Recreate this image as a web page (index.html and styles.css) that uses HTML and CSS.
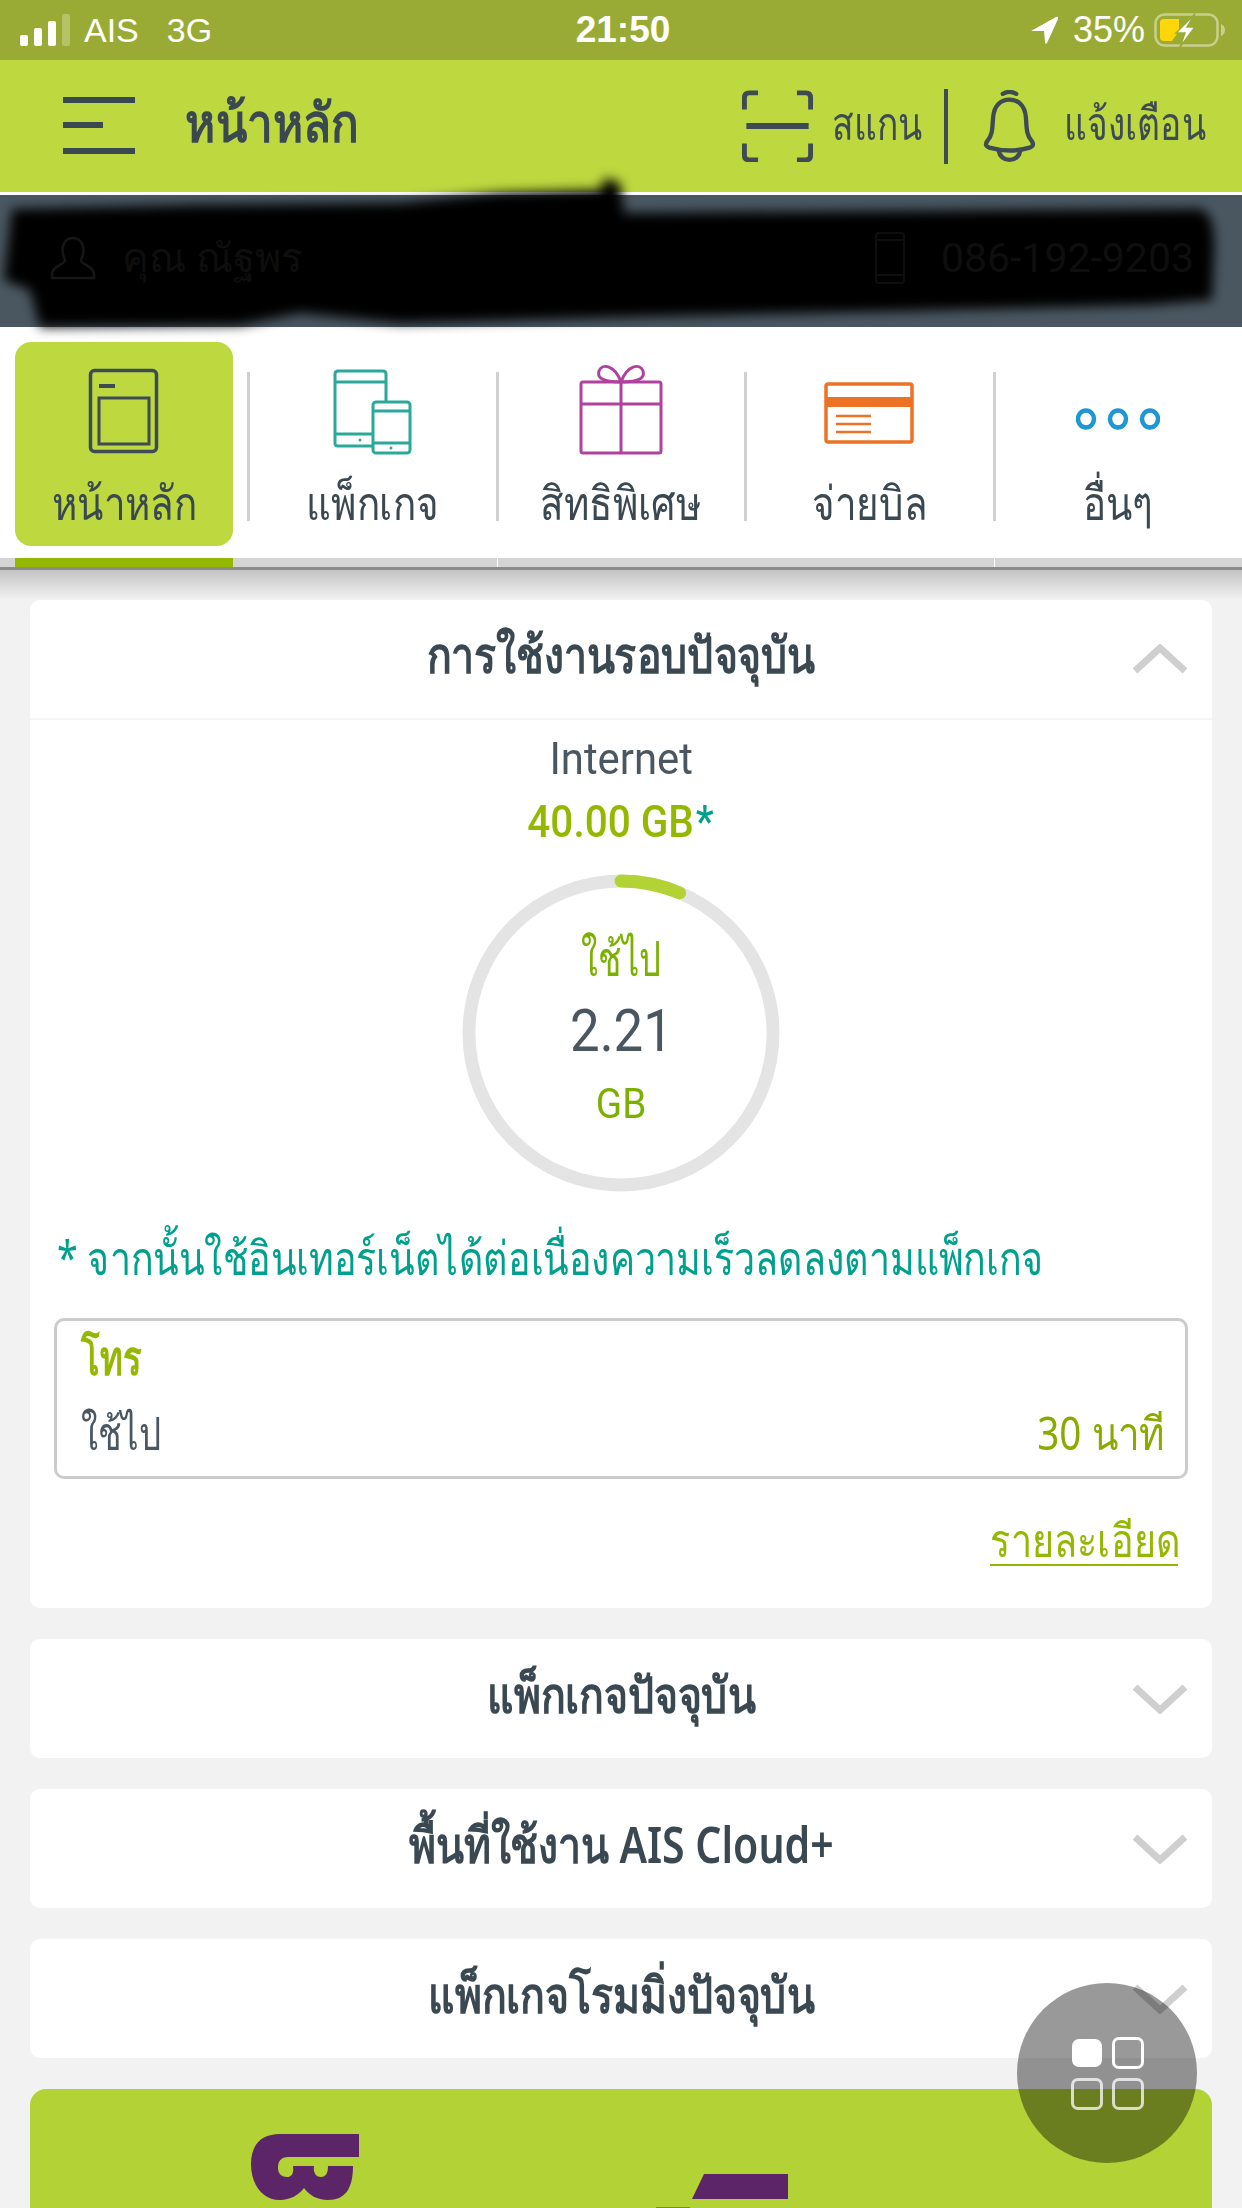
FILE: index.html
```html
<!DOCTYPE html>
<html lang="th">
<head>
    <meta charset="UTF-8">
    <meta name="viewport" content="width=device-width, initial-scale=1.0">
    <title>หน้าหลัก</title>
    <link rel="stylesheet" href="styles.css">
</head>
<body>
<div class="page">
    <div class="status-bar">
        <div class="status-left">
            <div class="signal"><i class="b1"></i><i class="b2"></i><i class="b3"></i><i class="b4"></i></div>
            <span>AIS</span>
            <span>3G</span>
        </div>
        <div class="status-time">21:50</div>
        <div class="status-right">
            <svg class="arrow-icon" width="27" height="28" viewBox="0 0 27 28"><path d="M0 15 L25 1 Q28 0 27 3 L16 27 Q14 29 14 26 L13 15 Z" fill="#fff"/></svg>
            <span>35%</span>
            <svg width="72" height="34" viewBox="0 0 72 34">
                <rect x="1.5" y="1.5" width="62" height="31" rx="9" fill="none" stroke="#c8d08c" stroke-width="2.5"/>
                <path d="M6 10 Q6 6 10 6 H25 V18 L18 28 H10 Q6 28 6 24 Z" fill="#ffd60a"/>
                <path d="M67 11 Q71 13 71 17 Q71 21 67 23 Z" fill="#c8d08c"/>
                <path d="M41 1 L22 20 H31 L26 34 L41 14 H33 Z" fill="#fff" stroke="#9aab35" stroke-width="1.5"/>
            </svg>
        </div>
    </div>

    <header class="top-bar">
        <div class="menu-icon"><i></i><i class="short"></i><i></i></div>
        <h1 class="page-title">หน้าหลัก</h1>
        <div class="top-actions">
            <svg class="scan-icon" width="73" height="72" viewBox="0 0 74 74" fill="none" stroke="#3e4b55" stroke-width="5">
                <path d="M17 3 H8 Q3 3 3 8 V20"/><path d="M57 3 H66 Q71 3 71 8 V20"/>
                <path d="M3 55 V67 Q3 72 8 72 H17"/><path d="M71 55 V67 Q71 72 66 72 H57"/>
                <path d="M5 37 H69" stroke-width="6"/>
            </svg>
            <span class="action-label scan-label">สแกน</span>
            <span class="action-sep"></span>
            <svg class="bell-icon" width="57" height="73" viewBox="0 0 58 76" fill="none" stroke="#3e4b55" stroke-width="4.5" stroke-linecap="round">
                <path d="M22 4 Q29 0 36 4"/>
                <path d="M6 53 C12 46 11 38 12 28 C13 16 20 10 29 10 C38 10 45 16 46 28 C47 38 46 46 52 53 C55 57 53 59 50 60 C36 64 22 64 8 60 C5 59 3 57 6 53 Z"/>
                <path d="M18 63 C19 76 39 76 40 63"/>
            </svg>
            <span class="action-label alert-label">แจ้งเตือน</span>
        </div>
    </header>

    <section class="profile-bar">
        <div class="profile-user">
            <svg width="46" height="44" viewBox="0 0 46 44" fill="none" stroke="#161616" stroke-width="2.5"><path d="M15 24 C10 14 13 2 23 2 C33 2 36 14 31 24 C30 28 44 30 44 38 V42 H2 V38 C2 30 16 28 15 24 Z"/></svg>
            <span>คุณ ณัฐพร</span>
        </div>
        <div class="profile-phone">
            <svg width="30" height="52" viewBox="0 0 30 52" fill="none" stroke="#0e0e0e" stroke-width="2"><rect x="1" y="1" width="28" height="50" rx="3"/><path d="M1 8 H29 M1 43 H29"/></svg>
            <span>086-192-9203</span>
        </div>
        <svg class="scribble" width="1242" height="132" viewBox="0 0 1242 132">
            <defs><filter id="soft"><feGaussianBlur stdDeviation="6"/></filter></defs>
            <path d="M12 14 L200 10 L400 8 L500 -2 L600 -5 L605 -17 L620 -12 L624 18 L900 16 L1200 14 Q1216 18 1214 60 L1212 105 L1150 110 L900 116 L620 122 L400 128 L300 118 L240 130 L40 132 L30 95 L4 85 Z" fill="#000" filter="url(#soft)"/>
        </svg>
    </section>

    <nav class="tabs">
        <a class="tab active">
            <svg class="icon-home" width="72" height="86" viewBox="0 0 72 86" fill="none" stroke="#3e4b55">
                <rect x="2.5" y="2.5" width="66" height="81" rx="4" stroke-width="3.5"/>
                <path d="M11 18 H27" stroke-width="4"/>
                <rect x="11" y="30" width="50" height="46" stroke-width="3"/>
            </svg>
            <span>หน้าหลัก</span>
        </a>
        <a class="tab">
            <svg class="icon-devices" width="80" height="86" viewBox="0 0 80 86" fill="none" stroke="#2aa99b" stroke-width="3">
                <path d="M40 77 H5 Q2 77 2 74 V5 Q2 2 5 2 H50 Q53 2 53 5 V33"/>
                <path d="M2 13 H53 M2 65 H40"/>
                <rect x="40" y="33" width="37" height="51" rx="3" fill="#fff"/>
                <path d="M40 42 H77 M40 74 H77"/>
                <circle cx="27" cy="71" r="1.5" fill="#2aa99b" stroke="none"/>
                <circle cx="58" cy="79" r="1.5" fill="#2aa99b" stroke="none"/>
            </svg>
            <span>แพ็กเกจ</span>
        </a>
        <a class="tab">
            <svg class="icon-gift" width="84" height="92" viewBox="0 0 84 92" fill="none" stroke="#b0429e" stroke-width="3">
                <rect x="2" y="19" width="80" height="71" rx="2"/>
                <path d="M2 41 H82 M42 19 V90"/>
                <path d="M42 19 C22 19 18 14 20 8 C23 0 36 2 42 19 C48 2 61 0 64 8 C66 14 62 19 42 19 Z"/>
            </svg>
            <span>สิทธิพิเศษ</span>
        </a>
        <a class="tab">
            <svg class="icon-bill" width="90" height="62" viewBox="0 0 90 62" fill="none" stroke="#ec7225">
                <rect x="2" y="2" width="86" height="58" rx="2" stroke-width="3.5"/>
                <path d="M2 20 H88" stroke-width="10"/>
                <path d="M12 34 H47 M12 42 H47 M12 50 H47" stroke-width="2.5"/>
            </svg>
            <span>จ่ายบิล</span>
        </a>
        <a class="tab">
            <svg class="icon-more" width="84" height="22" viewBox="0 0 84 22" fill="none" stroke="#1f97d4" stroke-width="4.5">
                <ellipse cx="10" cy="11" rx="8" ry="8.5"/><ellipse cx="42" cy="11" rx="8" ry="8.5"/><ellipse cx="74" cy="11" rx="8" ry="8.5"/>
            </svg>
            <span>อื่นๆ</span>
        </a>
    </nav>
    <div class="tab-rail">
        <i class="rail-active"></i><i></i><i class="rail-cut"></i><i></i><i class="rail-cut"></i>
    </div>

    <main class="content">
        <section class="card usage">
            <div class="card-head">
                <h2>การใช้งานรอบปัจจุบัน</h2>
                <svg class="chevron" width="54" height="30" viewBox="0 0 54 30"><path d="M2 27 L27 4 L52 27" fill="none" stroke="#cfcfcf" stroke-width="7"/></svg>
            </div>
            <div class="usage-body">
                <div class="usage-type">Internet</div>
                <div class="usage-total">40.00 GB<em>*</em></div>
                <div class="ring">
                    <svg width="318" height="318" viewBox="0 0 320 320" fill="none">
                        <circle cx="160" cy="160" r="153" stroke="#e4e4e4" stroke-width="13"/>
                        <path d="M160 7 A153 153 0 0 1 219 19" stroke="#b2d235" stroke-width="13" stroke-linecap="round"/>
                    </svg>
                    <div class="ring-text">
                        <span class="ring-label">ใช้ไป</span>
                        <span class="ring-value">2.21</span>
                        <span class="ring-unit">GB</span>
                    </div>
                </div>
                <p class="usage-note">* จากนั้นใช้อินเทอร์เน็ตได้ต่อเนื่องความเร็วลดลงตามแพ็กเกจ</p>
                <div class="call-box">
                    <div class="call-title">โทร</div>
                    <div class="call-row"><span>ใช้ไป</span><strong>30 นาที</strong></div>
                </div>
                <div class="detail-row"><a class="detail-link"><span>รายละเอียด</span></a></div>
            </div>
        </section>

        <section class="card card-head">
            <h2>แพ็กเกจปัจจุบัน</h2>
            <svg class="chevron" width="54" height="30" viewBox="0 0 54 30"><path d="M2 3 L27 26 L52 3" fill="none" stroke="#cfcfcf" stroke-width="7"/></svg>
        </section>
        <section class="card card-head">
            <h2>พื้นที่ใช้งาน AIS Cloud+</h2>
            <svg class="chevron" width="54" height="30" viewBox="0 0 54 30"><path d="M2 3 L27 26 L52 3" fill="none" stroke="#cfcfcf" stroke-width="7"/></svg>
        </section>
        <section class="card card-head">
            <h2>แพ็กเกจโรมมิ่งปัจจุบัน</h2>
            <svg class="chevron" width="54" height="30" viewBox="0 0 54 30"><path d="M2 3 L27 26 L52 3" fill="none" stroke="#cfcfcf" stroke-width="7"/></svg>
        </section>

        <section class="banner">
            <svg width="1182" height="119" viewBox="0 0 1182 119" fill="#5b2568">
                <path d="M329 45 V68 H258 C251 68 248 72 248 79 C248 85 252 88 257 88 C262 88 264 84 263 77 H284 C283 84 286 88 291 88 C296 88 298 84 298 77 H323 C323 100 315 111 298 111 C287 111 279 106 274 99 C269 106 260 111 250 111 C232 111 221 95 221 75 C221 55 232 45 250 45 Z"/>
                <path d="M674 85 H758 V110 H662 Z"/>
                <rect x="626" y="118" width="34" height="1" opacity="0.5"/>
            </svg>
        </section>
    </main>

    <button class="fab" type="button">
        <i class="solid"></i><i></i><i class="lower"></i><i class="lower"></i>
    </button>
</div>
</body>
</html>
```

FILE: styles.css
```css
* {
    box-sizing: border-box;
}

html,
body {
    margin: 0;
    padding: 0;
}

body {
    font-family: 'Noto Sans', 'Roboto', sans-serif;
    color: #3a4852;
    background-color: #f2f2f2;
}

.page {
    position: relative;
    width: 1242px;
    height: 2208px;
    overflow: hidden;
    background-color: #f2f2f2;
}

/* status bar */
.status-bar {
    display: grid;
    grid-template-columns: 1fr auto 1fr;
    align-items: center;
    height: 60px;
    padding: 0 16px 0 20px;
    background-color: #9aab35;
    color: #fff;
    font-family: 'Liberation Sans', sans-serif;
    font-size: 34px;
}

.status-left {
    display: flex;
    align-items: center;
    gap: 28px;
}

.signal {
    display: flex;
    align-items: flex-end;
    gap: 6px;
    height: 32px;
    margin-right: -14px;
}

.signal i {
    width: 8px;
    border-radius: 2px;
    background-color: #fff;
}

.signal .b1 { height: 11px; }
.signal .b2 { height: 18px; }
.signal .b3 { height: 25px; }
.signal .b4 { height: 32px; background-color: #b5c266; }

.status-time {
    font-weight: bold;
    font-size: 37px;
}

.status-right {
    display: flex;
    align-items: center;
    justify-content: flex-end;
    gap: 9px;
    font-size: 36px;
}

.arrow-icon {
    margin-right: 6px;
}

/* header */
.top-bar {
    display: flex;
    align-items: center;
    height: 132px;
    padding: 0 36px 0 63px;
    background-color: #bed840;
}

.menu-icon {
    display: flex;
    flex-direction: column;
    justify-content: space-between;
    width: 72px;
    height: 57px;
    margin-bottom: 2px;
}

.menu-icon i {
    display: block;
    height: 6px;
    background-color: #3a4852;
}

.menu-icon .short {
    width: 40px;
}

.page-title {
    margin: 0 0 6px 50px;
    font-size: 54px;
    font-weight: bold;
    white-space: nowrap;
    color: #3a4852;
    transform: scaleX(0.85);
    transform-origin: left;
}

.top-actions {
    display: flex;
    align-items: center;
    margin-left: auto;
}

.top-actions svg {
    flex-shrink: 0;
}

.scan-icon {
    margin-right: 18px;
}

.action-label {
    margin-bottom: 5px;
    font-size: 46px;
    white-space: nowrap;
    color: #3e4b55;
    transform: scaleX(0.77);
    transform-origin: left;
}

.scan-label {
    width: 87px;
}

.alert-label {
    width: 142px;
}

.action-sep {
    flex-shrink: 0;
    width: 4px;
    height: 75px;
    margin: 0 33px 0 25px;
    background-color: #3e4b55;
}

.bell-icon {
    margin-right: 26px;
}

/* profile */
.profile-bar {
    position: relative;
    display: flex;
    align-items: center;
    justify-content: space-between;
    height: 135px;
    padding: 0 48px 6px 50px;
    border-top: 3px solid #fff;
    background-color: #4a5761;
    color: #0e0e0e;
    font-size: 40px;
}

.profile-user,
.profile-phone {
    position: relative;
    z-index: 1;
    display: flex;
    align-items: center;
    gap: 26px;
}

.profile-phone {
    gap: 36px;
    font-family: 'Roboto', sans-serif;
    font-size: 41px;
}

.scribble {
    position: absolute;
    top: 0;
    left: 0;
    overflow: visible;
}

/* tabs */
.tabs {
    display: grid;
    grid-template-columns: repeat(5, 1fr);
    grid-template-rows: 204px;
    height: 231px;
    padding-top: 15px;
    background-color: #fff;
}

.tab {
    position: relative;
    display: flex;
    flex-direction: column;
    align-items: center;
    margin: 0 15px;
    color: #3a4852;
}

.tab span {
    margin-top: auto;
    margin-bottom: 16px;
    font-size: 47px;
    line-height: 56px;
    white-space: nowrap;
    transform: scaleX(0.82);
}

.icon-home { margin-top: 26px; }
.icon-devices { margin-top: 27px; }
.icon-gift { margin-top: 21px; }
.icon-bill { margin-top: 40px; }
.icon-more { margin-top: 66px; }

.tab.active {
    border-radius: 16px;
    background-color: #bed840;
}

.tab + .tab::before {
    content: "";
    position: absolute;
    left: -16px;
    top: 30px;
    bottom: 25px;
    width: 3px;
    background-color: #d0d0d0;
}

.tab-rail {
    display: grid;
    grid-template-columns: repeat(5, 1fr);
    height: 12px;
    background-color: #d4d4d4;
    border-bottom: 3px solid #8a8a8a;
}

.rail-active {
    width: 218px;
    margin-left: 15px;
    background-color: #94b800;
}

.rail-cut {
    border-left: 1px solid #fff;
}

/* cards */
.content {
    display: flex;
    flex-direction: column;
    gap: 31px;
    padding: 30px 30px 0;
    background: linear-gradient(#c4c4c4, #f2f2f2 30px) no-repeat;
}

.card {
    flex-shrink: 0;
    border-radius: 10px;
    background-color: #fff;
}

.card-head {
    display: grid;
    grid-template-columns: 1fr auto 1fr;
    align-items: center;
    height: 119px;
}

.usage .card-head {
    height: 120px;
    border-bottom: 2px solid #f4f4f4;
}

.card-head h2 {
    grid-column: 2;
    margin: 0 0 7px;
    font-size: 50px;
    font-weight: 600;
    white-space: nowrap;
    color: #3a4852;
    transform: scaleX(0.82);
}

.chevron {
    grid-column: 3;
    justify-self: end;
    margin-right: 25px;
}

.usage-body {
    display: flex;
    flex-direction: column;
    align-items: center;
    height: 888px;
    padding: 11px 24px 0;
}

.usage-type {
    font-family: 'Roboto', sans-serif;
    font-size: 45px;
    line-height: 56px;
    color: #4a5761;
    transform: scaleX(0.93);
}

.usage-total {
    margin-top: 7px;
    font-family: 'Roboto', sans-serif;
    font-weight: 500;
    font-size: 45px;
    line-height: 56px;
    color: #94b800;
    transform: scaleX(0.9);
}

.usage-total em {
    font-style: normal;
    margin-left: 2px;
    color: #00a08e;
}

.ring {
    display: grid;
    margin-top: 24px;
}

.ring svg,
.ring-text {
    grid-area: 1 / 1;
}

.ring-text {
    display: flex;
    flex-direction: column;
    align-items: center;
    justify-content: center;
}

.ring-text span {
    line-height: 73px;
}

.ring-label {
    margin-top: -5px;
    font-size: 48px;
    color: #7cb000;
    transform: scaleX(0.72);
}

.ring-value {
    font-family: 'Roboto', sans-serif;
    font-size: 60px;
    color: #4a5761;
    transform: scaleX(0.88);
}

.ring-unit {
    font-family: 'Roboto', sans-serif;
    font-size: 43px;
    color: #7cb000;
    transform: scaleX(0.9);
}

.usage-note {
    align-self: flex-start;
    margin: 35px 0 0 3px;
    font-size: 47px;
    line-height: 60px;
    white-space: nowrap;
    color: #00a08e;
    transform: scaleX(0.8);
    transform-origin: left;
}

.call-box {
    flex-shrink: 0;
    width: 100%;
    height: 161px;
    margin-top: 31px;
    padding: 7px 20px 7px 24px;
    border: 3px solid #ccc;
    border-radius: 10px;
}

.call-title {
    font-size: 48px;
    font-weight: bold;
    line-height: 58px;
    color: #94b800;
    transform: scaleX(0.72);
    transform-origin: left;
}

.call-row {
    display: flex;
    justify-content: space-between;
    margin-top: 17px;
    font-size: 46px;
    line-height: 58px;
    color: #4a5761;
}

.call-row span {
    transform: scaleX(0.76);
    transform-origin: left;
}

.call-row strong {
    font-weight: normal;
    color: #8aaa00;
    transform: scaleX(0.84);
    transform-origin: right;
}

.detail-row {
    align-self: flex-end;
    margin: 37px 10px 0 0;
}

.detail-link {
    display: block;
    width: 188px;
    border-bottom: 2px solid #94b800;
    font-size: 46px;
    line-height: 50px;
    color: #94b800;
}

.detail-link span {
    display: block;
    margin-top: -2px;
    white-space: nowrap;
    transform: scaleX(0.82);
    transform-origin: left;
}

/* banner */
.banner {
    flex-shrink: 0;
    height: 140px;
    border-radius: 16px 16px 0 0;
    background-color: #b2d235;
}

/* floating button */
.fab {
    position: absolute;
    left: 1017px;
    top: 1983px;
    display: grid;
    grid-template-columns: 32px 32px;
    grid-template-rows: 32px 32px;
    gap: 9px;
    align-content: center;
    justify-content: center;
    width: 180px;
    height: 180px;
    padding: 0;
    border: 0;
    border-radius: 50%;
    background-color: rgba(0, 0, 0, 0.4);
}

.fab i {
    border: 3px solid #fff;
    border-radius: 7px;
}

.fab .solid {
    margin: 2px 1px;
    background-color: #fff;
}

.fab .lower {
    border-color: rgba(255, 255, 255, 0.75);
}
```
